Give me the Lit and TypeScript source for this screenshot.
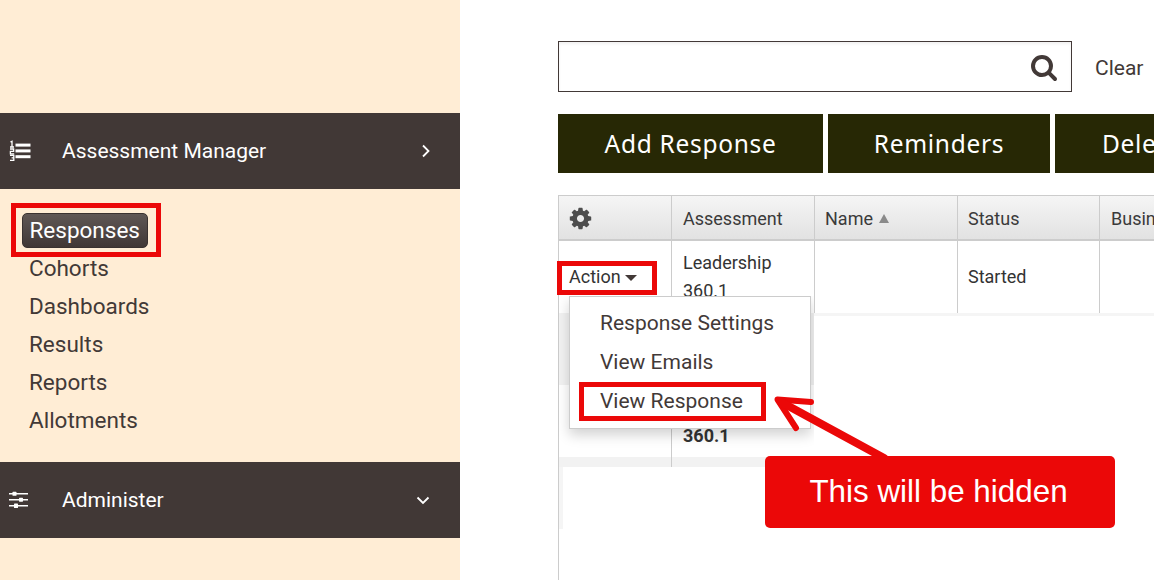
import { LitElement, html, css, svg } from "lit";
import { customElement } from "lit/decorators.js";

const GEAR = "M1152 896q0-106-75-181t-181-75-181 75-75 181 75 181 181 75 181-75 75-181zm512-109v222q0 12-8 23t-20 13l-185 28q-19 54-39 91 35 50 107 138 10 12 10 25t-9 23q-27 37-99 108t-94 71q-12 0-26-9l-138-108q-44 23-91 38-16 136-29 186-7 28-36 28h-222q-14 0-24.5-8.5t-11.5-21.5l-28-184q-49-16-90-37l-141 107q-10 9-25 9-14 0-25-11-126-114-165-168-7-10-7-23 0-12 8-23 15-21 51-66.5t54-70.5q-27-50-41-99l-183-27q-13-2-21-12.5t-8-23.5v-222q0-12 8-23t19-13l186-28q14-46 39-92-40-57-107-138-10-12-10-24 0-10 9-23 26-36 98.5-107.5t94.5-71.5q13 0 26 10l138 107q44-23 91-38 16-136 29-186 7-28 36-28h222q14 0 24.5 8.5t11.5 21.5l28 184q49 16 90 37l142-107q9-9 24-9 13 0 25 10 129 119 165 170 7 8 7 22 0 12-8 23-15 21-51 66.5t-54 70.5q26 50 41 98l183 28q13 2 21 12.5t8 23.5z";
const SEARCH = "M1216 832q0-185-131.5-316.5t-316.5-131.5-316.5 131.5-131.5 316.5 131.5 316.5 316.5 131.5 316.5-131.5 131.5-316.5zm512 832q0 52-38 90t-90 38q-54 0-90-38l-343-342q-179 124-399 124-143 0-273.5-55.5t-225-150-150-225-55.5-273.5 55.5-273.5 150-225 225-150 273.5-55.5 273.5 55.5 225 150 150 225 55.5 273.5q0 220-124 399l343 343q37 37 37 90z";

const listIcon = svg`<svg class="nav-icon" width="22" height="22" viewBox="0 0 22 22" fill="#fff">
  <rect x="6.5" y="3.6" width="15" height="3"/><rect x="6.5" y="9.4" width="15" height="3"/><rect x="6.5" y="15.2" width="15" height="3"/>
  <path d="M1.4 2 3 1.2V7M1 7h4M1 9h3.6v2.4H1.4v2.4h3.8M1 15.4h3.8v2.4H2.6m2.2 0v2.6H1" fill="none" stroke="#fff" stroke-width="1.3"/>
</svg>`;
const slidersIcon = svg`<svg class="nav-icon" width="22" height="22" viewBox="0 0 22 22" fill="#fff">
  <rect x="0" y="4" width="19" height="1.5"/><rect x="0" y="10" width="19" height="1.5"/><rect x="0" y="16" width="19" height="1.5"/>
  <rect x="3.5" y="2.8" width="4" height="4" rx=".6"/><rect x="10" y="8.7" width="4" height="4" rx=".6"/><rect x="5" y="14.6" width="4" height="4.4" rx=".6"/>
</svg>`;

@customElement("app-root")
export class AppRoot extends LitElement {
  static styles = css`
    :host { display: block; width: 1154px; height: 580px; overflow: hidden; position: relative; background: #fff; font-family: Roboto, sans-serif; color: #423937; }
    .page { display: flex; height: 580px; }
    .side { width: 460px; flex: none; background: #ffedd5; padding-top: 113px; box-sizing: border-box; }
    .bar { height: 76px; background: #413836; color: #fff; display: flex; align-items: center; font-size: 21px; padding-left: 9px; padding-right: 28px; }
    .nav-icon { flex: none; width: 22px; height: 22px; }
    .bar .label { margin-left: 31px; flex: 1; }
    .nav { list-style: none; margin: 0; padding: 22px 0 23px 22px; font-size: 22.5px; line-height: 38px; }
    .nav li { height: 38px; padding-left: 7px; }
    .nav li.active { padding-left: 0; height: 38px; display: flex; align-items: center; }
    .pill { display: block; width: 126px; height: 35px; box-sizing: border-box; padding-left: 6.5px; line-height: 33px; color: #fff; border-radius: 5px; background: linear-gradient(#5f5755, #413836); border: 1px solid #3a3230; white-space: nowrap; }
    .main { flex: 1; min-width: 0; padding: 41px 0 0 98px; overflow: hidden; }
    .search-row { display: flex; align-items: center; height: 51px; }
    .search { width: 514px; height: 51px; box-sizing: border-box; border: 1px solid #423937; box-shadow: inset 0 2px 3px rgba(0,0,0,.06); display: flex; align-items: center; justify-content: flex-end; padding-right: 13px; }
    .search svg { width: 28px; height: 28px; fill: #423937; }
    .clear { margin-left: 23px; font-size: 21px; padding-top: 2px; }
    .actions { display: flex; gap: 5px; margin-top: 22px; height: 59px; }
    .actions div { background: #272805; color: #fff; display: flex; align-items: center; justify-content: center; font-family: "Noto Sans", sans-serif; font-size: 24.5px; letter-spacing: .7px; flex: none; box-sizing: border-box; }
    .a1 { width: 265px; } .a2 { width: 222px; } .a3 { width: 200px; justify-content: flex-start !important; padding-left: 47px; }
    .table { margin-top: 22px; width: 700px; border-left: 1px solid #ccc; border-top: 1px solid #ccc; height: 400px; font-size: 18px; color: #333; }
    .tr { display: grid; grid-template-columns: 113px 143px 143px 142px 1fr; }
    .th { height: 41px; padding-top: 2px; border-bottom: 2px solid #ccc; background: linear-gradient(#f5f5f5, #e2e2e2); display: flex; align-items: center; padding-left: 11px; border-right: 1px solid #ccc; color: #3a3a3a; }
    .th:last-child { border-right: 0; }
    .th:nth-child(n+3), .td:nth-child(n+3) { padding-left: 10px; }
    .th:last-child { padding-left: 11px; }
    .th svg { width: 25px; height: 25px; fill: #4d4d4d; margin-left: -2px; }
    .sort { width: 0; height: 0; border: 5.5px solid transparent; border-top: 0; border-bottom: 9px solid #8a8a8a; margin-left: 6px; }
    .td { box-sizing: border-box; border-right: 1px solid #ccc; padding-left: 11px; line-height: 28px; display: flex; align-items: center; }
    .td:last-child { border-right: 0; }
    .r1 .td { height: 72px; }
    .r2 .td { height: 72px; background: #f2f2f2; }
    .r3 .td { height: 72px; background: #fff; }
    .r4 .td { height: 10px; background: #f2f2f2; }
    .td.first { padding-left: 10px; }
    .action { display: flex; align-items: center; gap: 4px; }
    .caret { width: 0; height: 0; border: 6px solid transparent; border-bottom: 0; border-top: 6px solid #423937; margin-top: 2px; }
    .wrap { display: block; }
    .low { align-self: flex-end; margin-bottom: 7px; }
    .bold { font-weight: 700; }
    .cover { position: absolute; background: #fff; }
    .c1 { left: 814px; top: 316px; width: 340px; height: 264px; }
    .c2 { left: 563px; top: 467px; width: 251px; height: 62px; }
    .c3 { left: 559px; top: 529px; width: 255px; height: 51px; }
    .c4 { left: 559px; top: 467px; width: 4px; height: 62px; background: #f5f5f5; }
    .c5 { left: 814px; top: 313px; width: 340px; height: 3px; background: #f5f5f5; }
    .menu { position: absolute; left: 11px; top: 0; width: 242px; height: 133px; box-sizing: border-box; background: #fff; border: 1px solid #ccc; box-shadow: 0 6px 12px rgba(0,0,0,.175); font-size: 21px; padding: 7px 0 0 30px; color: #423937; line-height: 39px; }
    .menu div { height: 39px; white-space: nowrap; }
    .clip { position: absolute; left: 558px; top: 296px; width: 256px; height: 171px; overflow: hidden; pointer-events: none; }
    .mark { position: absolute; border: 5px solid #eb0808; box-sizing: border-box; }
    .m1 { left: 11px; top: 203px; width: 150px; height: 54px; }
    .m2 { left: 557px; top: 261px; width: 100px; height: 34px; }
    .m3 { left: 579px; top: 382px; width: 187px; height: 39px; }
    .arrow { position: absolute; left: 760px; top: 390px; }
    .callout { position: absolute; left: 765px; top: 456px; width: 350px; height: 72px; padding-right: 3px; background: #eb0808; border-radius: 5px; color: #fff; font-family: "Liberation Sans", sans-serif; font-size: 31.4px; display: flex; align-items: center; justify-content: center; box-sizing: border-box; }
  `;

  render() {
    return html`
      <div class="page">
        <aside class="side">
          <div class="bar">
            ${listIcon}
            <span class="label">Assessment Manager</span>
            <svg width="12" height="16" viewBox="0 0 12 16" fill="none" stroke="#fff" stroke-width="1.8"><path d="M3 2.5l5.5 5.5-5.5 5.5"/></svg>
          </div>
          <ul class="nav">
            <li class="active"><span class="pill">Responses</span></li>
            <li>Cohorts</li>
            <li>Dashboards</li>
            <li>Results</li>
            <li>Reports</li>
            <li>Allotments</li>
          </ul>
          <div class="bar">
            ${slidersIcon}
            <span class="label">Administer</span>
            <svg width="16" height="12" viewBox="0 0 16 12" fill="none" stroke="#fff" stroke-width="1.8" style="margin-left:-1px;margin-right:1px"><path d="M2.5 3.5l5.5 5.5 5.5-5.5"/></svg>
          </div>
        </aside>
        <main class="main">
          <div class="search-row">
            <div class="search"><svg viewBox="0 0 1792 1792"><path d="${SEARCH}"/></svg></div>
            <span class="clear">Clear</span>
          </div>
          <div class="actions">
            <div class="a1">Add Response</div>
            <div class="a2">Reminders</div>
            <div class="a3">Delete</div>
          </div>
          <div class="table">
            <div class="tr">
              <div class="th"><svg viewBox="0 0 1792 1792"><path d="${GEAR}"/></svg></div>
              <div class="th">Assessment</div>
              <div class="th">Name<span class="sort"></span></div>
              <div class="th">Status</div>
              <div class="th">Business</div>
            </div>
            <div class="tr r1">
              <div class="td first"><span class="action">Action<span class="caret"></span></span></div>
              <div class="td"><span class="wrap">Leadership<br />360.1</span></div>
              <div class="td"></div>
              <div class="td">Started</div>
              <div class="td"></div>
            </div>
            <div class="tr r2"><div class="td"></div><div class="td"></div><div class="td"></div><div class="td"></div><div class="td"></div></div>
            <div class="tr r3">
              <div class="td"></div>
              <div class="td bold"><span class="wrap low">360.1</span></div>
              <div class="td"></div><div class="td"></div><div class="td"></div>
            </div>
            <div class="tr r4"><div class="td"></div><div class="td"></div><div class="td"></div><div class="td"></div><div class="td"></div></div>
          </div>
        </main>
      </div>
      <div class="cover c1"></div>
      <div class="cover c5"></div>
      <div class="cover c2"></div>
      <div class="cover c3"></div>
      <div class="cover c4"></div>
      <div class="clip">
        <div class="menu">
          <div>Response Settings</div>
          <div>View Emails</div>
          <div>View Response</div>
        </div>
      </div>
      <div class="mark m1"></div>
      <div class="mark m2"></div>
      <div class="mark m3"></div>
      <svg class="arrow" width="140" height="80" viewBox="0 0 140 80" fill="none" stroke="#eb0808" stroke-linecap="round" stroke-linejoin="round">
        <path d="M51 12 17.5 9.5 36 38" stroke-width="6"/>
        <path d="M21 12 124 68" stroke-width="8"/>
      </svg>
      <div class="callout">This will be hidden</div>
    `;
  }
}
